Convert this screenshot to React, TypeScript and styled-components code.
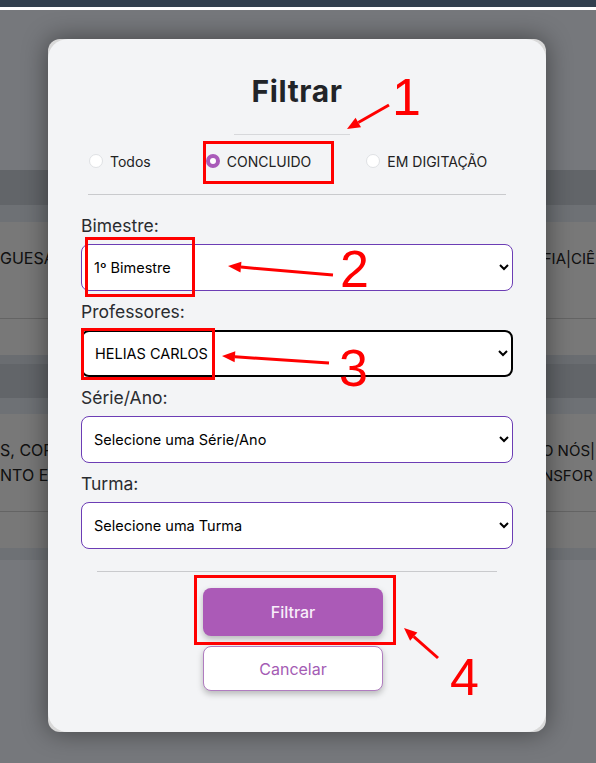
import styled, { createGlobalStyle } from 'styled-components';

const GlobalStyle = createGlobalStyle`
  html, body {
    margin: 0;
    padding: 0;
  }
  body {
    font-family: Inter, "Noto Sans", sans-serif;
    background: #ecf1f8;
  }
  * {
    box-sizing: border-box;
  }
`;

const Page = styled.div`
  position: relative;
  width: 596px;
  height: 763px;
  overflow: hidden;
  background: #ecf1f8;
`;

const Navbar = styled.header`
  position: relative;
  z-index: 2;
  height: 10px;
  background: #323f4e;
  border-bottom: 3px solid #ffffff;
`;

const Content = styled.main`
  padding-top: 160px;
`;

const Band = styled.div<{ $h: number; $tone: string }>`
  height: ${(p) => p.$h}px;
  background: ${(p) => p.$tone};
`;

const Row = styled.div<{ $h: number }>`
  display: flex;
  justify-content: space-between;
  height: ${(p) => p.$h}px;
  padding-top: 24px;
  background: #f0f0f0;
  font-size: 16px;
  line-height: 25px;
  color: #222;
`;

const SubRow = styled.div`
  height: 37px;
  background: #f0f0f0;
  border-top: 1px solid #c8c8c8;
`;

const CellLeft = styled.div`
  white-space: nowrap;
`;

const CellRight = styled.div`
  flex-shrink: 0;
  padding-right: 1px;
  white-space: nowrap;
  font-size: 15px;
`;

const Backdrop = styled.div`
  position: absolute;
  top: 10px;
  left: 0;
  right: 0;
  bottom: 0;
  z-index: 1;
  display: flex;
  align-items: flex-start;
  padding: 29px 0 0 48px;
  background: rgba(0, 0, 0, 0.5);
`;

const ModalFrame = styled.div`
  width: 498px;
  border-radius: 12px;
  background: #d9d9d9;
  box-shadow: 0 0 26px rgba(0, 0, 0, 0.45);
`;

const ModalCard = styled.div`
  display: flex;
  flex-direction: column;
  padding: 34px 33px 41px;
  border-radius: 20px;
  background: #f3f4f6;
`;

const Title = styled.h2`
  margin: 0;
  text-align: center;
  font-size: 30px;
  line-height: 36px;
  font-weight: 700;
  color: #222428;
  letter-spacing: 0.6px;
`;

const TitleRule = styled.hr`
  align-self: center;
  width: 116px;
  height: 1px;
  margin: 25px 10px 0 0;
  border: 0;
  background: #d7d8db;
`;

const RadioRow = styled.div`
  display: flex;
  gap: 55px;
  margin-top: 16px;
  padding-left: 8px;
  height: 20px;
  align-items: center;
`;

const RadioOption = styled.label`
  display: flex;
  align-items: center;
  gap: 7px;
  font-size: 14px;
  color: #222;
`;

const RadioDot = styled.span<{ $checked?: boolean }>`
  display: block;
  flex-shrink: 0;
  width: 14px;
  height: 14px;
  border-radius: 50%;
  background: #fff;
  border: ${(p) => (p.$checked ? '4px solid #a95bb9' : '1px solid #dfe1e4')};
`;

const Divider = styled.hr<{ $inset: number; $top: number }>`
  height: 1px;
  margin: ${(p) => p.$top}px ${(p) => p.$inset}px 0;
  border: 0;
  background: #c9cacd;
`;

const Form = styled.form`
  display: flex;
  flex-direction: column;
  margin-top: 18px;
`;

const Field = styled.div`
  display: flex;
  flex-direction: column;
  margin-bottom: 8px;
`;

const FieldLabel = styled.label`
  font-size: 17.5px;
  line-height: 26px;
  color: #2a2c30;
  margin-bottom: 5px;
`;

const Select = styled.select<{ $focused?: boolean }>`
  height: 47px;
  padding: 0 6px 0 8px;
  font-family: inherit;
  font-size: 14.5px;
  color: #000;
  background: #fff;
  border: ${(p) => (p.$focused ? '2px solid #000' : '1px solid #6c3db5')};
  border-radius: 8px;
  outline: none;
`;

const Actions = styled.div`
  display: flex;
  flex-direction: column;
  align-items: center;
  gap: 10px;
  margin-top: 16px;
  padding-right: 8px;
`;

const Button = styled.button<{ $variant: 'primary' | 'ghost' }>`
  width: 180px;
  height: ${(p) => (p.$variant === 'primary' ? 48 : 45)}px;
  font-family: inherit;
  font-size: 16px;
  font-weight: ${(p) => (p.$variant === 'primary' ? 500 : 400)};
  border-radius: 8px;
  color: ${(p) => (p.$variant === 'primary' ? '#f8eefa' : '#a45cb4')};
  background: ${(p) => (p.$variant === 'primary' ? '#ab5ab7' : '#ffffff')};
  border: ${(p) => (p.$variant === 'primary' ? '0' : '1px solid #b07cc0')};
  box-shadow: 0 3px 6px rgba(0, 0, 0, 0.25);
`;

const Annotations = styled.div`
  position: absolute;
  inset: 0;
  z-index: 3;
  pointer-events: none;
`;

const Marker = styled.span`
  position: absolute;
  font-family: "Liberation Sans", Arial, sans-serif;
  font-size: 52px;
  line-height: 1;
  color: #ff0000;
`;

type Pt = [number, number];

const Arrow = ({ from, to }: { from: Pt; to: Pt }) => {
  const [x1, y1] = from;
  const [x2, y2] = to;
  const len = Math.hypot(x2 - x1, y2 - y1);
  const ux = (x2 - x1) / len;
  const uy = (y2 - y1) / len;
  const hl = 13;
  const hw = 5.5;
  const bx = x2 - ux * hl;
  const by = y2 - uy * hl;
  const head = `${x2},${y2} ${bx - uy * hw},${by + ux * hw} ${bx + uy * hw},${by - ux * hw}`;
  return (
    <g>
      <line x1={x1} y1={y1} x2={bx} y2={by} stroke='#ff0000' strokeWidth={3} />
      <polygon points={head} fill='#ff0000' />
    </g>
  );
};

const boxes = [
  { x: 204.5, y: 142.5, w: 128, h: 40 },
  { x: 86.5, y: 238.5, w: 107, h: 57 },
  { x: 82.5, y: 329.5, w: 131, h: 49 },
  { x: 195.5, y: 576.5, w: 199, h: 67 },
];

const arrows: { from: Pt; to: Pt }[] = [
  { from: [389, 105], to: [347, 129] },
  { from: [333, 275], to: [228, 266] },
  { from: [329, 363], to: [222, 356] },
  { from: [438, 658], to: [404, 628] },
];

const markers = [
  { label: '1', left: 392, top: 71 },
  { label: '2', left: 340, top: 243 },
  { label: '3', left: 339, top: 342 },
  { label: '4', left: 450, top: 651 },
];

const fields = [
  { label: 'Bimestre:', value: '1º Bimestre' },
  { label: 'Professores:', value: 'HELIAS CARLOS', focused: true },
  { label: 'Série/Ano:', value: 'Selecione uma Série/Ano' },
  { label: 'Turma:', value: 'Selecione uma Turma' },
];

const statuses = [
  { label: 'Todos' },
  { label: 'CONCLUIDO', checked: true },
  { label: 'EM DIGITAÇÃO' },
];

export default function App() {
  return (
    <Page>
      <GlobalStyle />
      <Navbar />
      <Content>
        <Band $h={35} $tone='#c4cad2' />
        <Band $h={17} $tone='#dce2ea' />
        <Row $h={96}>
          <CellLeft>GUESA</CellLeft>
          <CellRight>FIA|CIÊ</CellRight>
        </Row>
        <SubRow />
        <Band $h={9} $tone='#d4dae2' />
        <Band $h={34} $tone='#c4cad2' />
        <Band $h={16} $tone='#dce2ea' />
        <Row $h={97}>
          <CellLeft>
            S, COR
            <br />
            NTO E
          </CellLeft>
          <CellRight>
            O NÓS|
            <br />
            NSFOR
          </CellRight>
        </Row>
        <SubRow />
        <Band $h={12} $tone='#dce2ea' />
      </Content>

      <Backdrop>
        <ModalFrame>
          <ModalCard>
            <Title>Filtrar</Title>
            <TitleRule />
            <RadioRow>
              {statuses.map((s) => (
                <RadioOption key={s.label}>
                  <RadioDot $checked={s.checked} />
                  {s.label}
                </RadioOption>
              ))}
            </RadioRow>
            <Divider $inset={7} $top={23} />
            <Form>
              {fields.map((f) => (
                <Field key={f.label}>
                  <FieldLabel>{f.label}</FieldLabel>
                  <Select $focused={f.focused} defaultValue={f.value}>
                    <option>{f.value}</option>
                  </Select>
                </Field>
              ))}
              <Divider $inset={16} $top={14} />
              <Actions>
                <Button type='button' $variant='primary'>
                  Filtrar
                </Button>
                <Button type='button' $variant='ghost'>
                  Cancelar
                </Button>
              </Actions>
            </Form>
          </ModalCard>
        </ModalFrame>
      </Backdrop>

      <Annotations>
        <svg width='596' height='763'>
          {boxes.map((b, i) => (
            <rect
              key={i}
              x={b.x}
              y={b.y}
              width={b.w}
              height={b.h}
              fill='none'
              stroke='#ff0000'
              strokeWidth={3}
            />
          ))}
          {arrows.map((a, i) => (
            <Arrow key={i} from={a.from} to={a.to} />
          ))}
        </svg>
        {markers.map((m) => (
          <Marker key={m.label} style={{ left: m.left, top: m.top }}>
            {m.label}
          </Marker>
        ))}
      </Annotations>
    </Page>
  );
}
